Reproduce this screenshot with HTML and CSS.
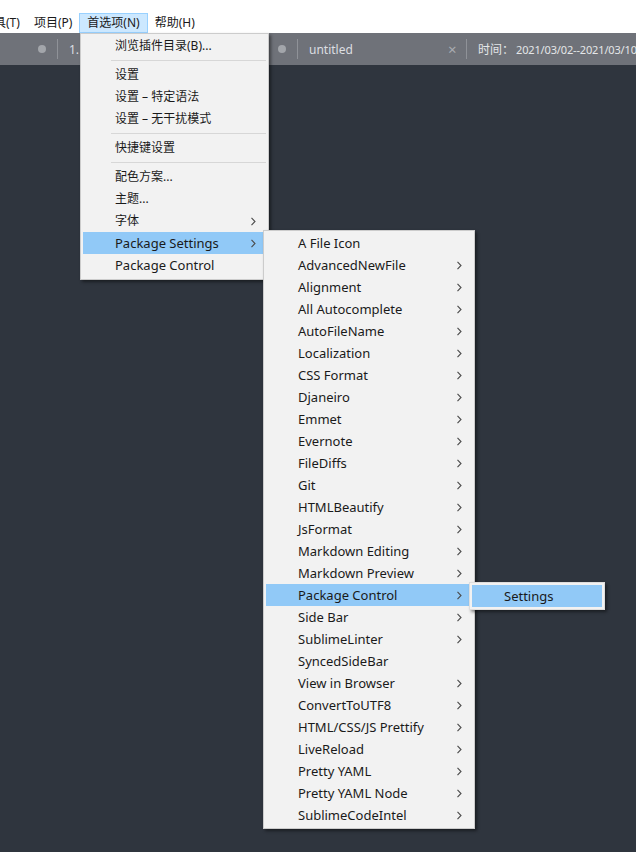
FILE: index.html
```html
<!DOCTYPE html>
<html lang="zh">
<head>
<meta charset="utf-8">
<link rel="stylesheet" href="styles.css">
</head>
<body>
<div class="app">
  <div class="menubar">
    <span class="mb-item">具(T)</span>
    <span class="mb-item">项目(P)</span>
    <span class="mb-item active">首选项(N)</span>
    <span class="mb-item">帮助(H)</span>
  </div>
  <div class="tabbar">
    <div class="tab tab1">
      <span class="dot"></span>
      <span class="div"></span>
      <span class="tab-label">1.</span>
    </div>
    <div class="tab tab2">
      <span class="dot"></span>
      <span class="div"></span>
      <span class="tab-label name">untitled</span>
      <span class="close">×</span>
      <span class="div"></span>
      <span class="tab-label time">时间：<span class="date">2021/03/02--2021/03/10</span></span>
    </div>
  </div>
  <div class="editor"></div>

  <div class="menu menu1">
    <div class="mi zh">浏览插件目录(B)...</div>
    <div class="sep"></div>
    <div class="mi zh">设置</div>
    <div class="mi zh">设置 – 特定语法</div>
    <div class="mi zh">设置 – 无干扰模式</div>
    <div class="sep"></div>
    <div class="mi zh">快捷键设置</div>
    <div class="sep"></div>
    <div class="mi zh">配色方案...</div>
    <div class="mi zh">主题...</div>
    <div class="mi zh sub">字体<svg class="arr" width="5" height="9" viewBox="0 0 5 9"><path d="M0.5 0.8 L4 4.5 L0.5 8.2" fill="none" stroke="#4a4a4a" stroke-width="1.1"/></svg></div>
    <div class="mi sub hl">Package Settings<svg class="arr" width="5" height="9" viewBox="0 0 5 9"><path d="M0.5 0.8 L4 4.5 L0.5 8.2" fill="none" stroke="#4a4a4a" stroke-width="1.1"/></svg></div>
    <div class="mi">Package Control</div>
  </div>

  <div class="menu menu2">
    <div class="mi">A File Icon</div>
    <div class="mi sub">AdvancedNewFile<svg class="arr" width="5" height="9" viewBox="0 0 5 9"><path d="M0.5 0.8 L4 4.5 L0.5 8.2" fill="none" stroke="#4a4a4a" stroke-width="1.1"/></svg></div>
    <div class="mi sub">Alignment<svg class="arr" width="5" height="9" viewBox="0 0 5 9"><path d="M0.5 0.8 L4 4.5 L0.5 8.2" fill="none" stroke="#4a4a4a" stroke-width="1.1"/></svg></div>
    <div class="mi sub">All Autocomplete<svg class="arr" width="5" height="9" viewBox="0 0 5 9"><path d="M0.5 0.8 L4 4.5 L0.5 8.2" fill="none" stroke="#4a4a4a" stroke-width="1.1"/></svg></div>
    <div class="mi sub">AutoFileName<svg class="arr" width="5" height="9" viewBox="0 0 5 9"><path d="M0.5 0.8 L4 4.5 L0.5 8.2" fill="none" stroke="#4a4a4a" stroke-width="1.1"/></svg></div>
    <div class="mi sub">Localization<svg class="arr" width="5" height="9" viewBox="0 0 5 9"><path d="M0.5 0.8 L4 4.5 L0.5 8.2" fill="none" stroke="#4a4a4a" stroke-width="1.1"/></svg></div>
    <div class="mi sub">CSS Format<svg class="arr" width="5" height="9" viewBox="0 0 5 9"><path d="M0.5 0.8 L4 4.5 L0.5 8.2" fill="none" stroke="#4a4a4a" stroke-width="1.1"/></svg></div>
    <div class="mi sub">Djaneiro<svg class="arr" width="5" height="9" viewBox="0 0 5 9"><path d="M0.5 0.8 L4 4.5 L0.5 8.2" fill="none" stroke="#4a4a4a" stroke-width="1.1"/></svg></div>
    <div class="mi sub">Emmet<svg class="arr" width="5" height="9" viewBox="0 0 5 9"><path d="M0.5 0.8 L4 4.5 L0.5 8.2" fill="none" stroke="#4a4a4a" stroke-width="1.1"/></svg></div>
    <div class="mi sub">Evernote<svg class="arr" width="5" height="9" viewBox="0 0 5 9"><path d="M0.5 0.8 L4 4.5 L0.5 8.2" fill="none" stroke="#4a4a4a" stroke-width="1.1"/></svg></div>
    <div class="mi sub">FileDiffs<svg class="arr" width="5" height="9" viewBox="0 0 5 9"><path d="M0.5 0.8 L4 4.5 L0.5 8.2" fill="none" stroke="#4a4a4a" stroke-width="1.1"/></svg></div>
    <div class="mi sub">Git<svg class="arr" width="5" height="9" viewBox="0 0 5 9"><path d="M0.5 0.8 L4 4.5 L0.5 8.2" fill="none" stroke="#4a4a4a" stroke-width="1.1"/></svg></div>
    <div class="mi sub">HTMLBeautify<svg class="arr" width="5" height="9" viewBox="0 0 5 9"><path d="M0.5 0.8 L4 4.5 L0.5 8.2" fill="none" stroke="#4a4a4a" stroke-width="1.1"/></svg></div>
    <div class="mi sub">JsFormat<svg class="arr" width="5" height="9" viewBox="0 0 5 9"><path d="M0.5 0.8 L4 4.5 L0.5 8.2" fill="none" stroke="#4a4a4a" stroke-width="1.1"/></svg></div>
    <div class="mi sub">Markdown Editing<svg class="arr" width="5" height="9" viewBox="0 0 5 9"><path d="M0.5 0.8 L4 4.5 L0.5 8.2" fill="none" stroke="#4a4a4a" stroke-width="1.1"/></svg></div>
    <div class="mi sub">Markdown Preview<svg class="arr" width="5" height="9" viewBox="0 0 5 9"><path d="M0.5 0.8 L4 4.5 L0.5 8.2" fill="none" stroke="#4a4a4a" stroke-width="1.1"/></svg></div>
    <div class="mi sub hl">Package Control<svg class="arr" width="5" height="9" viewBox="0 0 5 9"><path d="M0.5 0.8 L4 4.5 L0.5 8.2" fill="none" stroke="#4a4a4a" stroke-width="1.1"/></svg></div>
    <div class="mi sub">Side Bar<svg class="arr" width="5" height="9" viewBox="0 0 5 9"><path d="M0.5 0.8 L4 4.5 L0.5 8.2" fill="none" stroke="#4a4a4a" stroke-width="1.1"/></svg></div>
    <div class="mi sub">SublimeLinter<svg class="arr" width="5" height="9" viewBox="0 0 5 9"><path d="M0.5 0.8 L4 4.5 L0.5 8.2" fill="none" stroke="#4a4a4a" stroke-width="1.1"/></svg></div>
    <div class="mi">SyncedSideBar</div>
    <div class="mi sub">View in Browser<svg class="arr" width="5" height="9" viewBox="0 0 5 9"><path d="M0.5 0.8 L4 4.5 L0.5 8.2" fill="none" stroke="#4a4a4a" stroke-width="1.1"/></svg></div>
    <div class="mi sub">ConvertToUTF8<svg class="arr" width="5" height="9" viewBox="0 0 5 9"><path d="M0.5 0.8 L4 4.5 L0.5 8.2" fill="none" stroke="#4a4a4a" stroke-width="1.1"/></svg></div>
    <div class="mi sub">HTML/CSS/JS Prettify<svg class="arr" width="5" height="9" viewBox="0 0 5 9"><path d="M0.5 0.8 L4 4.5 L0.5 8.2" fill="none" stroke="#4a4a4a" stroke-width="1.1"/></svg></div>
    <div class="mi sub">LiveReload<svg class="arr" width="5" height="9" viewBox="0 0 5 9"><path d="M0.5 0.8 L4 4.5 L0.5 8.2" fill="none" stroke="#4a4a4a" stroke-width="1.1"/></svg></div>
    <div class="mi sub">Pretty YAML<svg class="arr" width="5" height="9" viewBox="0 0 5 9"><path d="M0.5 0.8 L4 4.5 L0.5 8.2" fill="none" stroke="#4a4a4a" stroke-width="1.1"/></svg></div>
    <div class="mi sub">Pretty YAML Node<svg class="arr" width="5" height="9" viewBox="0 0 5 9"><path d="M0.5 0.8 L4 4.5 L0.5 8.2" fill="none" stroke="#4a4a4a" stroke-width="1.1"/></svg></div>
    <div class="mi sub">SublimeCodeIntel<svg class="arr" width="5" height="9" viewBox="0 0 5 9"><path d="M0.5 0.8 L4 4.5 L0.5 8.2" fill="none" stroke="#4a4a4a" stroke-width="1.1"/></svg></div>
  </div>

  <div class="menu menu3">
    <div class="mi hl">Settings</div>
  </div>
</div>
</body>
</html>
```
FILE: styles.css
```css
* { box-sizing: border-box; }
html, body { margin: 0; padding: 0; }
body {
  width: 636px;
  height: 852px;
  overflow: hidden;
  font-family: "Noto Sans", "Noto Sans CJK SC", sans-serif;
  font-size: 13px;
  color: #1a1a1a;
  background: #2f353e;
}
.app {
  position: relative;
  width: 636px;
  height: 852px;
  display: flex;
  flex-direction: column;
}
.menubar {
  height: 33px;
  background: #ffffff;
  display: flex;
  align-items: flex-end;
  margin-left: -13px;
  font-size: 12px;
}
.mb-item {
  height: 20px;
  line-height: 18px;
  padding: 0 6px;
  border: 1px solid transparent;
  white-space: nowrap;
  color: #1a1a1a;
  flex-shrink: 0;
}
.mb-item.active {
  background: #cce8ff;
  border-color: #99d1ff;
  padding: 0 7px;
}
.tabbar {
  height: 32px;
  background: #6f7279;
  display: flex;
  align-items: center;
  color: #dcdee1;
  font-size: 12px;
  overflow: hidden;
}
.tab {
  display: flex;
  align-items: center;
  height: 100%;
  flex-shrink: 0;
}
.tab1 { width: 245px; padding-left: 38px; }
.tab2 { padding-left: 33px; }
.dot {
  width: 8px;
  height: 8px;
  border-radius: 50%;
  background: #a3a6ab;
  margin-right: 11px;
  flex-shrink: 0;
}
.div {
  width: 1px;
  height: 20px;
  background: #8f9298;
  margin-right: 11px;
  flex-shrink: 0;
}
.tab-label { white-space: nowrap; }
.tab-label.name { width: 139px; }
.close {
  color: #a9acb1;
  font-size: 15px;
  width: 18px;
  line-height: 1;
}
.time { color: #e4e6e8; }
.date {
  font-size: 11px;
  letter-spacing: -0.15px;
  margin-left: 2px;
}
.editor { flex: 1; background: #2f353e; }

.menu {
  position: absolute;
  background: #f2f2f2;
  border: 1px solid #cccccc;
  box-shadow: 2px 2px 3px rgba(0,0,0,0.45);
  padding: 1px 2px;
}
.menu1 {
  left: 80px;
  top: 33px;
  width: 189px;
  padding-top: 1px;
  padding-bottom: 3px;
}
.menu2 {
  left: 263px;
  top: 230px;
  width: 212px;
  padding-top: 1px;
  padding-bottom: 2px;
}
.menu3 {
  left: 469px;
  top: 582px;
  width: 136px;
  padding: 2px 2px;
  border-color: #dedede;
}
.mi {
  height: 22px;
  line-height: 22px;
  padding-left: 32px;
  position: relative;
  white-space: nowrap;
}
.mi.zh { font-size: 12px; }
.mi.hl { background: #91c9f7; }
.arr {
  position: absolute;
  right: 10px;
  top: 7px;
}
.sep {
  height: 7px;
  margin-left: 28px;
  position: relative;
}
.sep::after {
  content: "";
  position: absolute;
  left: 0;
  right: 0;
  top: 3px;
  height: 1px;
  background: #d7d7d7;
}
```
